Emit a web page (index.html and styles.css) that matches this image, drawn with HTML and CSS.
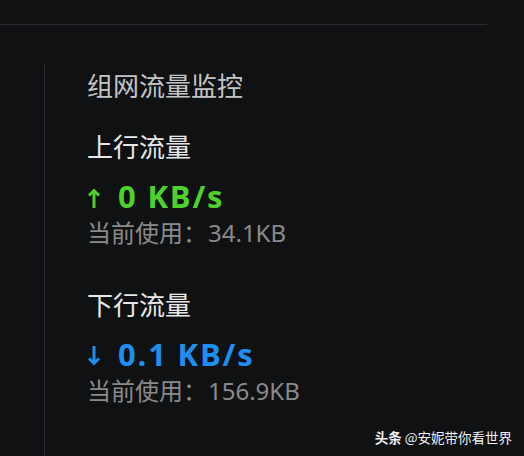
FILE: index.html
```html
<!DOCTYPE html>
<html lang="zh-CN">
<head>
<meta charset="utf-8">
<link rel="stylesheet" href="styles.css">
</head>
<body>
<div class="topbar"></div>
<main class="panel">
  <h1 class="title">组网流量监控</h1>
  <section class="stat">
    <h2 class="stat-name">上行流量</h2>
    <div class="speed up"><svg class="arrow" viewBox="0 0 12 20" width="12" height="20"><path d="M6 20V2.5M1 7.5l5-5 5 5" fill="none" stroke="currentColor" stroke-width="3"/></svg>0 KB/s</div>
    <div class="used">当前使用：<span class="num">34.1KB</span></div>
  </section>
  <section class="stat">
    <h2 class="stat-name">下行流量</h2>
    <div class="speed down"><svg class="arrow" viewBox="0 0 12 20" width="12" height="20"><path d="M6 0v17.5M1 12.5l5 5 5-5" fill="none" stroke="currentColor" stroke-width="3"/></svg>0.1 KB/s</div>
    <div class="used">当前使用：<span class="num">156.9KB</span></div>
  </section>
</main>
<div class="watermark"><b>头条</b> @安妮带你看世界</div>
</body>
</html>
```
FILE: styles.css
```css
html, body {
  margin: 0;
  height: 100%;
}
body {
  background: #101113;
  font-family: "Noto Sans", "Noto Sans CJK SC", sans-serif;
  overflow: hidden;
  position: relative;
}
.topbar {
  width: 487px;
  height: 24px;
  border-bottom: 1px solid #2b2d30;
}
.panel {
  margin: 40px 0 0 44px;
  border-left: 1px solid #2a2c2f;
  padding: 4px 0 0 42px;
  height: 400px;
}
.title {
  margin: 0;
  font-size: 26px;
  font-weight: 400;
  line-height: 34px;
  color: #c4c4c4;
}
.stat {
  margin-top: 27px;
}
.stat + .stat {
  margin-top: 40px;
}
.stat-name {
  margin: 0;
  font-size: 26px;
  font-weight: 400;
  line-height: 34px;
  color: #e8e8e8;
}
.speed {
  margin-top: 14px;
  font-family: "Open Sans", "Noto Sans", sans-serif;
  font-size: 31px;
  font-weight: 700;
  line-height: 36px;
  letter-spacing: 1.8px;
  display: flex;
  align-items: center;
}
.arrow {
  flex: none;
  margin: 3px 18px 0 1px;
}
.up { color: #4fd12c; }
.down { color: #1d8ff0; }
.used {
  margin-top: 4px;
  font-size: 24px;
  line-height: 30px;
  color: #8a8a8a;
}
.num {
  margin-left: 1px;
}
.watermark {
  position: absolute;
  right: 12px;
  bottom: 9px;
  font-size: 13.5px;
  color: #f2f2f2;
  font-family: "Noto Sans CJK SC", sans-serif;
}
.watermark b { font-weight: 700; }
```
